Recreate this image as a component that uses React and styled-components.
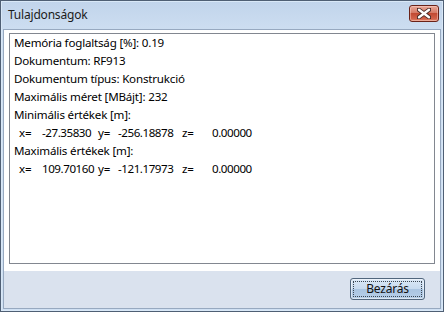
import React from "react";
import styled, { createGlobalStyle } from "styled-components";

const Global = createGlobalStyle`
  html, body { margin: 0; padding: 0; background: #fff; }
  body { width: 444px; height: 312px; overflow: hidden; }
`;

const Window = styled.div`
  box-sizing: border-box;
  width: 444px;
  height: 312px;
  border: 1px solid #4f5f74;
  background: linear-gradient(#c1d4eb, #cddef1 30px, #cfe0f3);
  box-shadow: inset 0 0 0 1px #d9e8f7;
  display: flex;
  flex-direction: column;
  font-family: "Noto Sans", "Open Sans", sans-serif;
  font-size: 11.6px;
  letter-spacing: -0.2px;
`;

const TitleBar = styled.div`
  height: 28px;
  display: flex;
  align-items: flex-start;
  justify-content: space-between;
  padding: 0 4px 0 7px;
`;

const Title = styled.div`
  font-size: 12px;
  line-height: 12px;
  color: #1b1b1b;
  padding-top: 8px;
`;

const CloseButton = styled.div`
  box-sizing: border-box;
  margin-top: 4px;
  width: 30px;
  height: 17px;
  border: 1px solid #6a2218;
  border-radius: 3px;
  background: linear-gradient(#e9a99a, #d67a66 45%, #c24a33 50%, #d2624a 85%, #e28a70);
  box-shadow: inset 0 0 0 1px rgba(255, 220, 210, 0.45);
  display: flex;
  align-items: center;
  justify-content: center;
`;

const Client = styled.div`
  flex: 1;
  margin: 0 2px 2px 2px;
  border: 1px solid #97a9c0;
  display: flex;
  flex-direction: column;
  background: #fff;
`;

const Content = styled.div`
  flex: 1;
  padding: 3px 5px 7px 5px;
  display: flex;
`;

const ListBox = styled.div`
  flex: 1;
  border: 1px solid #828790;
  padding: 0 4px;
  line-height: 18px;
  color: #000;
`;

const Line = styled.div`
  white-space: nowrap;
`;

const CoordRow = styled.div`
  display: flex;
  white-space: nowrap;
  padding-left: 5px;
`;

const Cell = styled.span`
  display: inline-block;
  width: ${(p) => p.$w}px;
  flex: none;
  letter-spacing: ${(p) => (p.$num ? "-0.45px" : "-0.2px")};
`;

const Footer = styled.div`
  height: 37px;
  background: #dae2ee;
  display: flex;
  justify-content: flex-end;
  align-items: flex-start;
  padding: 7px 15px 0 0;
  box-sizing: border-box;
`;

const Button = styled.div`
  box-sizing: border-box;
  width: 75px;
  height: 22px;
  border: 1px solid #51667d;
  border-radius: 3px;
  background: linear-gradient(#dbe8f6, #c8dbef 48%, #aac5e2 52%, #b7cfe8);
  box-shadow: inset 0 0 0 1px rgba(255, 255, 255, 0.5);
  padding: 2px;
  display: flex;
`;

const FocusRect = styled.div`
  flex: 1;
  border: 1px dotted #3b4652;
  display: flex;
  align-items: center;
  justify-content: center;
  font-size: 12px;
  color: #111;
  line-height: 14px;
`;

function CloseGlyph() {
  return (
    <svg width="14" height="11" viewBox="0 0 14 11">
      <path
        d="M1.5 1.5 L12.5 9.5 M12.5 1.5 L1.5 9.5"
        stroke="#4a2a26"
        strokeWidth="4.2"
        strokeLinecap="round"
      />
      <path
        d="M2 1.8 L12 9.2 M12 1.8 L2 9.2"
        stroke="#ffffff"
        strokeWidth="2.4"
        strokeLinecap="round"
      />
    </svg>
  );
}

function Coords({ x, y, z }) {
  return (
    <CoordRow>
      <Cell $w={23}>x=</Cell>
      <Cell $w={56} $num>{x}</Cell>
      <Cell $w={20}>y=</Cell>
      <Cell $w={64} $num>{y}</Cell>
      <Cell $w={30}>z=</Cell>
      <Cell $w={45} $num>{z}</Cell>
    </CoordRow>
  );
}

export default function App() {
  return (
    <>
      <Global />
      <Window>
        <TitleBar>
          <Title>Tulajdonságok</Title>
          <CloseButton>
            <CloseGlyph />
          </CloseButton>
        </TitleBar>
        <Client>
          <Content>
            <ListBox>
              <Line>Memória foglaltság [%]: 0.19</Line>
              <Line>Dokumentum: RF913</Line>
              <Line>Dokumentum típus: Konstrukció</Line>
              <Line>Maximális méret [MBájt]: 232</Line>
              <Line>Minimális értékek [m]:</Line>
              <Coords x="-27.35830" y="-256.18878" z="0.00000" />
              <Line>Maximális értékek [m]:</Line>
              <Coords x="109.70160" y="-121.17973" z="0.00000" />
            </ListBox>
          </Content>
          <Footer>
            <Button>
              <FocusRect>Bezárás</FocusRect>
            </Button>
          </Footer>
        </Client>
      </Window>
    </>
  );
}
